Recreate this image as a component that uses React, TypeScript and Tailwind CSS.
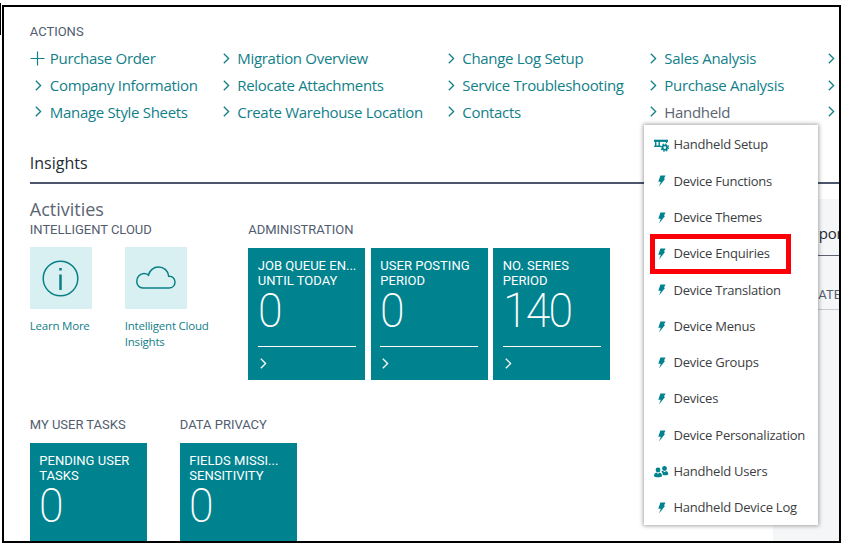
import React from "react";

const linkColumns = [
  { width: "w-[192.5px]", items: ["Purchase Order", "Company Information", "Manage Style Sheets"] },
  { width: "w-[225px]", items: ["Migration Overview", "Relocate Attachments", "Create Warehouse Location"] },
  { width: "w-[202px]", items: ["Change Log Setup", "Service Troubleshooting", "Contacts"] },
  { width: "w-[178px]", items: ["Sales Analysis", "Purchase Analysis", "Handheld"] },
  { width: "w-[30px]", items: ["", "", ""] },
];

const menuItems = [
  { icon: "setup", label: "Handheld Setup" },
  { icon: "bolt", label: "Device Functions" },
  { icon: "bolt", label: "Device Themes" },
  { icon: "bolt", label: "Device Enquiries" },
  { icon: "bolt", label: "Device Translation" },
  { icon: "bolt", label: "Device Menus" },
  { icon: "bolt", label: "Device Groups" },
  { icon: "bolt", label: "Devices" },
  { icon: "bolt", label: "Device Personalization" },
  { icon: "users", label: "Handheld Users" },
  { icon: "bolt", label: "Handheld Device Log" },
];

function Chevron({ className = "" }: { className?: string }) {
  return (
    <svg className={className} width="7" height="11" viewBox="0 0 7 11" fill="none" stroke="currentColor" strokeWidth="1.3">
      <path d="M0.8 0.8 5.6 5.5 0.8 10.2" />
    </svg>
  );
}

function Plus() {
  return (
    <svg width="15" height="15" viewBox="0 0 15 15" fill="none" stroke="currentColor" strokeWidth="1.2">
      <path d="M7.5 0.5v14M0.5 7.5h14" />
    </svg>
  );
}

function MenuIcon({ kind }: { kind: string }) {
  if (kind === "setup") {
    return (
      <svg width="15" height="13" viewBox="0 0 15 13" fill="none" stroke="currentColor">
        <path d="M0 1.8h14" strokeWidth="2.2" />
        <path d="M1.7 2v5M5.2 2v4.5M12.5 2v2M0.2 7.2h6.600" strokeWidth="1.4" />
        <circle cx="10.8" cy="8.6" r="2.3" strokeWidth="1.8" />
        <circle cx="10.8" cy="8.6" r="3.6" strokeWidth="1.3" strokeDasharray="1.4 1.43" />
      </svg>
    );
  }
  if (kind === "users") {
    return (
      <svg width="15" height="12" viewBox="0 0 15 12" fill="currentColor">
        <circle cx="10.5" cy="2.5" r="2.4" />
        <path d="M7.3 5.3 9 4.8l1.5 1.5L12 4.9c1.7.4 2.3 1.5 2.3 3.6-1.5.9-4 1.1-5.6.5 0-1.5-.3-2.6-1.4-3.7z" />
        <circle cx="4" cy="4" r="2.4" />
        <path d="M2.5 6.5 4 8l1.5-1.5c1.8.3 2.5 1.5 2.5 4C6 11.6 2 11.6 0 10.5c0-2.5.7-3.7 2.5-4z" />
      </svg>
    );
  }
  return (
    <svg className="ml-[3.5px]" width="8" height="12" viewBox="0 0 8 12" fill="currentColor">
      <path d="M2.4 0.5H7.5L5.9 3.800H7.200L1 11.500 2.800 6.700H0.300z" />
    </svg>
  );
}

function Heading({ children }: { children: React.ReactNode }) {
  return <div className="h-4 whitespace-nowrap font-['Roboto',sans-serif] text-[13px] leading-4 tracking-[-0.02px] text-[#525d6f]">{children}</div>;
}

function Cue({ lines, value }: { lines: string[]; value: string }) {
  return (
    <div className="h-[132px] w-[117px] shrink-0 bg-[#00838f] px-[9.5px] pt-[10px] font-['Roboto',sans-serif] text-white">
      <div className="whitespace-nowrap text-[13px] leading-[15px] tracking-[0.02px]">
        {lines.map((line) => (
          <div key={line}>{line}</div>
        ))}
      </div>
      <div className="mt-[4px] h-[38px] origin-left scale-x-[0.93] text-[48px] font-extralight leading-[38px] tracking-[-2px]">{value}</div>
      <div className="mt-[16px] h-px bg-white" />
      <Chevron className="ml-[2px] mt-[11px]" />
    </div>
  );
}

export default function App() {
  return (
    <div className="relative h-[549px] w-[853px] overflow-hidden bg-white font-['Open_Sans',sans-serif]">
      <div className="absolute left-0 top-[3px] h-8 w-px bg-black" />
      <div className="ml-[2px] h-[543px] w-[839px] pt-[5px]">
        <div className="h-[538px] overflow-hidden border-2 border-black">
          <div className="pl-[25.8px] pt-[17px]">
            <Heading>ACTIONS</Heading>
            <div className="mt-[5px] flex text-[15px] tracking-[-0.31px] text-[#128089]">
              {linkColumns.map((column, c) => (
                <div key={c} className={"shrink-0 " + column.width}>
                  {column.items.map((item, i) => (
                    <div key={i} className="flex h-[26.8px] items-center whitespace-nowrap">
                      <span className={"flex shrink-0 " + (c === 0 ? "w-[20px]" : "w-[15px]")}>
                        {item === "Purchase Order" ? <Plus /> : <Chevron className={c === 0 ? "ml-[5px]" : "ml-[0.5px]"} />}
                      </span>
                      <span className={item === "Handheld" ? "text-[#5b6573]" : ""}>{item}</span>
                    </div>
                  ))}
                </div>
              ))}
            </div>
            <div className="mt-[26.2px] h-[32px] border-b-2 border-[#4b566c] text-[16px] leading-[23px] text-[#252b33]">Insights</div>
            <div className="flex">
              <div className="w-[743px] shrink-0 pt-[14px]">
                <div className="h-[24px] text-[18px] leading-[22px] text-[#5b6573]">Activities</div>
                <div className="flex">
                  <div className="w-[218.5px]">
                    <Heading>INTELLIGENT CLOUD</Heading>
                    <div className="mt-[9.5px] flex gap-[33px] text-[11.5px] leading-[15.5px] tracking-[-0.22px] text-[#128089]">
                      <div className="w-[62px]">
                        <div className="flex h-[62px] items-center justify-center bg-[#d9f0f2]">
                          <svg width="38" height="38" viewBox="0 0 38 38" fill="none" stroke="#087f85" strokeWidth="1.5">
                            <circle cx="18.5" cy="19.5" r="17.3" />
                            <path d="M18.5 15.5v15.5" strokeWidth="2.5" />
                            <path d="M18.5 9v2.5" strokeWidth="2.5" />
                          </svg>
                        </div>
                        <div className="mt-[9px] whitespace-nowrap">Learn More</div>
                      </div>
                      <div className="w-[62px]">
                        <div className="flex h-[62px] items-center justify-center bg-[#d9f0f2]">
                          <svg width="40" height="24" viewBox="0 0 40 24" fill="none" stroke="#087f85" strokeWidth="1.5">
                            <path d="M7 22C3 22 .8 19 .8 15.5.8 11 4 7.5 8 7.5c2 0 3.3.6 4.5 1.6C13.5 4.5 17.5 1 22.5 1c5.5 0 9.8 4 10.2 9.2C36.5 10 39 12.5 39 16c0 3.5-2.5 6-6 6z" />
                          </svg>
                        </div>
                        <div className="mt-[9px] whitespace-nowrap">
                          Intelligent Cloud
                          <br />
                          Insights
                        </div>
                      </div>
                    </div>
                  </div>
                  <div>
                    <Heading>ADMINISTRATION</Heading>
                    <div className="mt-[10px] flex gap-[5.5px]">
                      <Cue lines={["JOB QUEUE EN...", "UNTIL TODAY"]} value="0" />
                      <Cue lines={["USER POSTING", "PERIOD"]} value="0" />
                      <Cue lines={["NO. SERIES", "PERIOD"]} value="140" />
                    </div>
                  </div>
                </div>
                <div className="mt-[37.6px] flex gap-[33px]">
                  <div>
                    <Heading>MY USER TASKS</Heading>
                    <div className="mt-[10px]">
                      <Cue lines={["PENDING USER", "TASKS"]} value="0" />
                    </div>
                  </div>
                  <div>
                    <Heading>DATA PRIVACY</Heading>
                    <div className="mt-[10px]">
                      <Cue lines={["FIELDS MISSI...", "SENSITIVITY"]} value="0" />
                    </div>
                  </div>
                </div>
              </div>
              <div className="mt-[15px] h-[360px] w-[70px] shrink-0 bg-[#f4f6f8]">
                <div className="h-[57px] border-b border-[#5b6170] pl-[46px] pt-[22px] text-[15px] leading-[24px] tracking-[-0.3px] text-[#252b33]">por</div>
                <div className="h-[54px] border-b border-[#c9ccd2] pl-[37px] pt-[31px] font-['Roboto',sans-serif] text-[13px] leading-4 text-[#525d6f]">CATE</div>
              </div>
            </div>
          </div>
        </div>
      </div>

      <div className="absolute left-[644px] top-[125px] h-[400px] w-[174px] bg-white pt-[2px] shadow-[0_0_4px_1px_rgba(0,0,0,0.35)]">
        {menuItems.map(({ icon, label }) => (
          <div key={label} className="flex h-[36.3px] items-center whitespace-nowrap pl-[10px] text-[13px] tracking-[-0.23px] text-[#3b3d42]">
            <span className="flex w-[19.5px] shrink-0 text-[#00838f]">
              <MenuIcon kind={icon} />
            </span>
            {label}
          </div>
        ))}
      </div>
      <div className="absolute left-[650px] top-[234px] h-[40px] w-[141px] border-[5px] border-[#fb0007]" />
    </div>
  );
}
